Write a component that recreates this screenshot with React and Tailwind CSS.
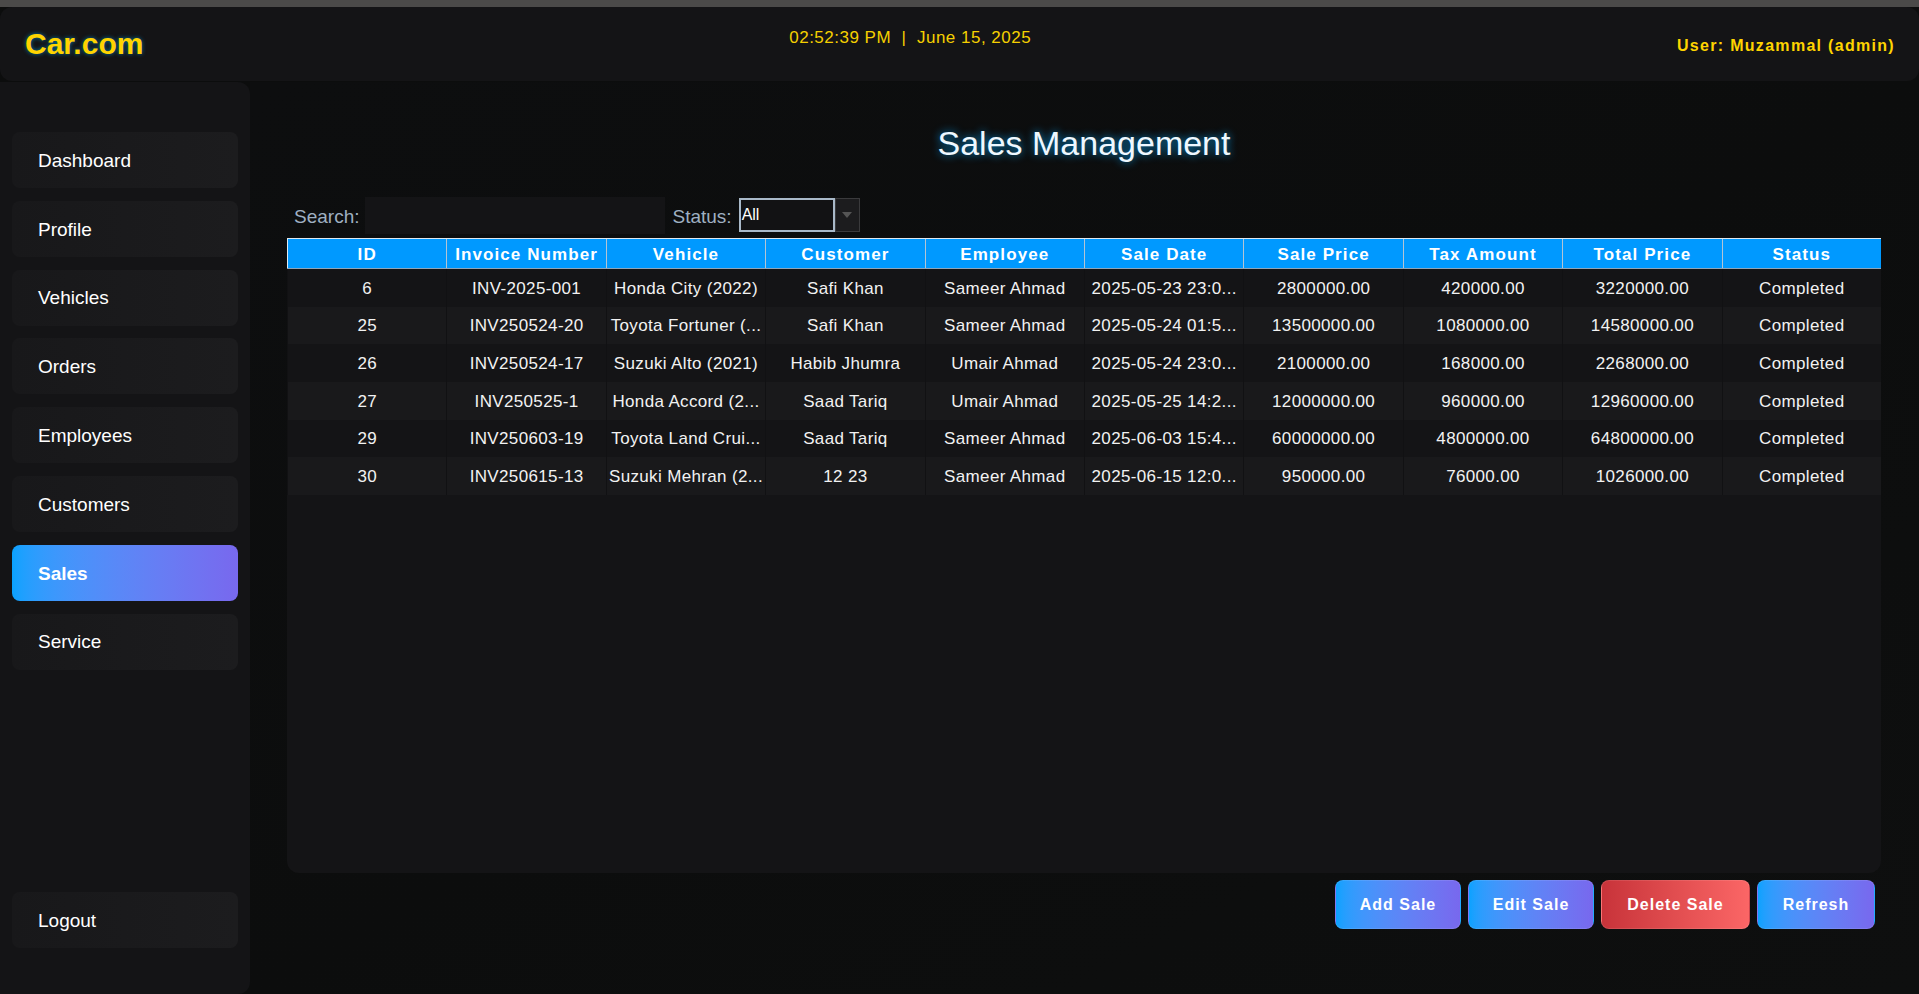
import React from "react";

const navItems = ["Dashboard", "Profile", "Vehicles", "Orders", "Employees", "Customers", "Sales", "Service"];

const columns = ["ID", "Invoice Number", "Vehicle", "Customer", "Employee", "Sale Date", "Sale Price", "Tax Amount", "Total Price", "Status"];

const rows = [
  ["6", "INV-2025-001", "Honda City (2022)", "Safi Khan", "Sameer Ahmad", "2025-05-23 23:0...", "2800000.00", "420000.00", "3220000.00", "Completed"],
  ["25", "INV250524-20", "Toyota Fortuner (...", "Safi Khan", "Sameer Ahmad", "2025-05-24 01:5...", "13500000.00", "1080000.00", "14580000.00", "Completed"],
  ["26", "INV250524-17", "Suzuki Alto (2021)", "Habib Jhumra", "Umair Ahmad", "2025-05-24 23:0...", "2100000.00", "168000.00", "2268000.00", "Completed"],
  ["27", "INV250525-1", "Honda Accord (2...", "Saad Tariq", "Umair Ahmad", "2025-05-25 14:2...", "12000000.00", "960000.00", "12960000.00", "Completed"],
  ["29", "INV250603-19", "Toyota Land Crui...", "Saad Tariq", "Sameer Ahmad", "2025-06-03 15:4...", "60000000.00", "4800000.00", "64800000.00", "Completed"],
  ["30", "INV250615-13", "Suzuki Mehran (2...", "12 23", "Sameer Ahmad", "2025-06-15 12:0...", "950000.00", "76000.00", "1026000.00", "Completed"],
];

export default function App() {
  return (
    <div className="w-[1919px] h-[994px] overflow-hidden flex flex-col bg-[#0c0d0d] font-['Liberation_Sans',Arial,sans-serif]">
      <div className="h-[7px] bg-[#4b4a49] shrink-0" />
      {/* Header */}
      <header className="h-[74px] shrink-0 bg-[#141416] rounded-xl flex items-center justify-between pl-[25px] pr-[24px]">
        <div className="text-[30px] font-bold text-[#ffd400] leading-none [text-shadow:0_0_4px_rgba(0,120,170,1)]">
          Car.com
        </div>
        <div className="text-[17px] tracking-[0.5px] text-[#f5d000] whitespace-pre -mt-[12px]">
          {"02:52:39 PM  |  June 15, 2025"}
        </div>
        <div className="text-[16px] font-bold tracking-[1.3px] text-[#ffd400] mt-[4px]">
          User: Muzammal (admin)
        </div>
      </header>
      <div className="flex flex-1 mt-[1px] min-h-0">
        {/* Sidebar */}
        <aside className="w-[250px] shrink-0 bg-[#141416] rounded-tr-xl rounded-br-xl flex flex-col pt-[50px] pb-[46px] px-[12px]">
          <div className="flex flex-col gap-[12.8px]">
            {navItems.map((n) =>
              n === "Sales" ? (
                <div
                  key={n}
                  className="h-[56px] rounded-lg flex items-center pl-[26px] pt-[2px] text-[19px] font-bold text-white bg-gradient-to-r from-[#08a2ff] to-[#7868ee]"
                >
                  {n}
                </div>
              ) : (
                <div
                  key={n}
                  className="h-[56px] rounded-lg flex items-center pl-[26px] pt-[2px] text-[19px] text-white bg-gradient-to-r from-[#18181a] to-[#1c1c1e]"
                >
                  {n}
                </div>
              )
            )}
          </div>
          <div className="mt-auto h-[56px] rounded-lg flex items-center pl-[26px] pt-[2px] text-[19px] text-white bg-gradient-to-r from-[#18181a] to-[#1c1c1e]">
            Logout
          </div>
        </aside>
        {/* Main */}
        <main className="flex-1 min-w-0 flex flex-col pl-[37px] pr-[38px] pt-[42px] pb-[65px] bg-gradient-to-br from-[#0d0e0f] via-[#0c0d0d] to-[#0e0f0f]">
          <h1 className="text-center text-[34px] leading-[39px] text-[#eef8ff] [text-shadow:0_0_8px_rgba(0,170,255,0.85)]">
            Sales Management
          </h1>
          <div className="mt-[34px] h-[37px] flex items-center">
            <span className="ml-[7px] mt-[3px] text-[19px] text-[#9fb0c2]">Search:</span>
            <div className="ml-[6px] w-[300px] h-[37px] bg-[#141416]" />
            <span className="ml-[7px] mt-[3px] text-[19px] text-[#9fb0c2]">Status:</span>
            <div className="ml-[7px] h-[34px] self-start flex mt-[1px]">
              <div className="w-[96px] h-[34px] border-2 border-[#a9b9c9] bg-[#121214] flex items-center pl-[1px] text-[16px] text-white">
                All
              </div>
              <div className="w-[25px] h-[34px] bg-[#1c1c1e] border border-[#3a3a3c] flex items-center justify-center">
                <div className="w-0 h-0 border-l-[5px] border-r-[5px] border-t-[6px] border-l-transparent border-r-transparent border-t-[#555]" />
              </div>
            </div>
          </div>
          {/* Table panel */}
          <div className="mt-[4px] flex-1 bg-[#141416] rounded-b-xl overflow-hidden flex flex-col">
            <div className="grid grid-cols-10 h-[31px] bg-[#0099ff] border-t border-[#dfe8f0] border-b border-b-[#8fa5ba]">
              {columns.map((c, i) => (
                <div
                  key={c}
                  className={
                    "flex items-center justify-center pt-[2px] text-[17px] font-bold tracking-[1.1px] text-white whitespace-nowrap overflow-hidden " +
                    (i === 0 ? "border-l border-[#e2eaf2]" : "border-l border-[#b4c4d4]")
                  }
                >
                  {c}
                </div>
              ))}
            </div>
            {rows.map((r, ri) => (
              <div
                key={ri}
                className={"grid grid-cols-10 h-[37.7px] " + (ri % 2 === 0 ? "bg-[#141416]" : "bg-[#19191b]")}
              >
                {r.map((v, ci) => (
                  <div
                    key={ci}
                    className="flex items-center justify-center pt-[1px] text-[17px] tracking-[0.35px] text-[#f2f2f2] whitespace-nowrap overflow-hidden border-l border-[#111113]"
                  >
                    {v}
                  </div>
                ))}
              </div>
            ))}
          </div>
          {/* Buttons */}
          <div className="mt-[7px] flex justify-end gap-[7px] pr-[6px]">
            <button className="h-[49px] w-[126px] rounded-lg text-[16px] font-bold tracking-[1px] text-white bg-gradient-to-r from-[#08a2ff] to-[#7868ee] border border-[#ffffff1a]">
              Add Sale
            </button>
            <button className="h-[49px] w-[126px] rounded-lg text-[16px] font-bold tracking-[1px] text-white bg-gradient-to-r from-[#08a2ff] to-[#7868ee] border border-[#ffffff1a]">
              Edit Sale
            </button>
            <button className="h-[49px] w-[149px] rounded-lg text-[16px] font-bold tracking-[1px] text-white bg-gradient-to-r from-[#c8333a] to-[#fb6666] border border-[#ffffff1a]">
              Delete Sale
            </button>
            <button className="h-[49px] w-[118px] rounded-lg text-[16px] font-bold tracking-[1px] text-white bg-gradient-to-r from-[#08a2ff] to-[#7868ee] border border-[#ffffff1a]">
              Refresh
            </button>
          </div>
        </main>
      </div>
    </div>
  );
}
